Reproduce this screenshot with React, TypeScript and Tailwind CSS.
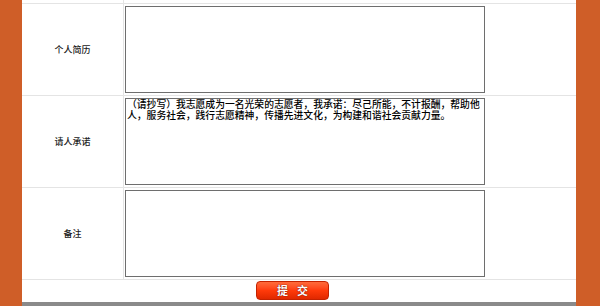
const cjk = { fontFamily: '"Noto Sans CJK SC", "Liberation Sans", sans-serif' };

const rows = [
  { label: "个人简历", value: "" },
  {
    label: "请人承诺",
    value:
      "（请抄写）我志愿成为一名光荣的志愿者，我承诺：尽己所能，不计报酬，帮助他人，服务社会，践行志愿精神，传播先进文化，为构建和谐社会贡献力量。",
  },
  { label: "备注", value: "" },
];

const FormRow = ({ label, value }: { label: string; value: string }) => (
  <div className="grid grid-cols-[102px_1fr] border-t border-[#e4e4e4]">
    <div className="flex h-[91px] items-center justify-center border-r border-[#e4e4e4] text-[9px] font-medium text-[#222]">
      {label}
    </div>
    <div className="pl-px pt-[2px]">
      <textarea
        defaultValue={value}
        className="block h-[87px] w-[360px] resize-none border border-[#6e6e6e] bg-white px-px py-0 text-[9.8px] font-medium leading-[11px] text-black outline-none"
        style={cjk}
      />
    </div>
  </div>
);

export default function App() {
  return (
    <div className="flex h-[306px] w-[600px] overflow-hidden bg-white" style={cjk}>
      <div className="w-[22px] bg-[#cf5e28]" />
      <div className="flex flex-1 flex-col">
        <div className="grid h-[3px] grid-cols-[102px_1fr]">
          <div className="border-r border-[#e4e4e4]" />
          <div />
        </div>
        {rows.map((r) => (
          <FormRow key={r.label} label={r.label} value={r.value} />
        ))}
        <div className="flex h-[23px] items-start border-t border-[#e4e4e4] pl-[234px] pt-px">
          <button className="flex h-[19px] w-[73px] items-center justify-center gap-[9px] rounded-[4px] border border-[#c42200] bg-gradient-to-b from-[#ff6a3a] via-[#ff3a0a] to-[#e02800] text-[11px] font-bold leading-none text-white [text-shadow:0_0_1px_#7a1000,0_0_1px_#7a1000]">
            <span>提</span>
            <span>交</span>
          </button>
        </div>
        <div className="flex-1 bg-[#8a8a8a]" />
      </div>
      <div className="w-[24px] bg-[#cf5e28]" />
    </div>
  );
}
